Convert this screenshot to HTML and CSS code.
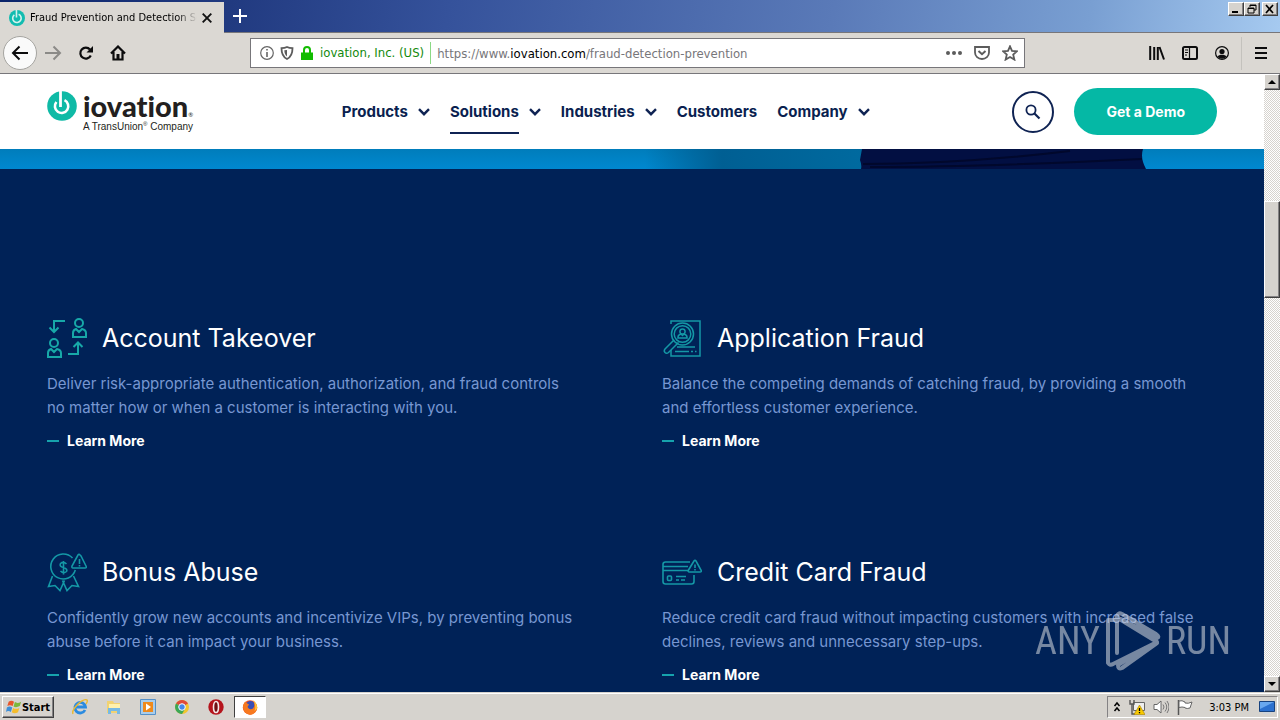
FILE: index.html
```html
<!DOCTYPE html>
<html lang="en">
<head>
<meta charset="utf-8">
<title>Fraud Prevention and Detection Solutions</title>
<link rel="stylesheet" href="styles.css">
</head>
<body>
<svg class="defs" aria-hidden="true">
  <symbol id="chevron" viewBox="0 0 12 8"><path d="M1 1.2l5 5 5-5" fill="none" stroke="#0f2353" stroke-width="2.4"/></symbol>
</svg>

<div class="titlebar">
  <div class="tab">
    <svg width="16" height="16" viewBox="0 0 30 30"><circle cx="15" cy="15" r="15" fill="#12bcb0"/><path d="M14 0v14M18 8a8 8 0 1 1-8 1" fill="none" stroke="#d5f2ee" stroke-width="3"/></svg>
    <span class="tab-title">Fraud Prevention and Detection Solutions</span>
    <button class="plain" aria-label="Close tab"><svg width="10" height="10" viewBox="0 0 10 10"><path d="M.7.7l8.6 8.6M9.3.7L.7 9.3" stroke="#111" stroke-width="1.9"/></svg></button>
  </div>
  <button class="plain new-tab" aria-label="New tab"><svg width="14" height="14" viewBox="0 0 14 14"><path d="M7 0v14M0 7h14" stroke="#fff" stroke-width="2"/></svg></button>
  <div class="window-buttons">
    <button class="bevel" aria-label="Minimize"><svg width="12" height="10" viewBox="0 0 12 10"><path d="M2 8h6" stroke="#000" stroke-width="2"/></svg></button>
    <button class="bevel" aria-label="Restore"><svg width="12" height="10" viewBox="0 0 12 10"><path d="M4 3V1h6v5H8M4 1.500h6M2 4h6v5H2zM2 4.500h6" fill="none" stroke="#000"/></svg></button>
    <button class="bevel close" aria-label="Close"><svg width="12" height="10" viewBox="0 0 12 10"><path d="M2 1l7 8M9 1L2 9" stroke="#000" stroke-width="1.700"/></svg></button>
  </div>
</div>

<div class="toolbar">
  <div class="tools-left">
    <button class="plain back" aria-label="Back"><svg width="18" height="16" viewBox="0 0 18 16"><path d="M17 8H2M8.500 1.500L2 8l6.500 6.500" fill="none" stroke="#0c0c0d" stroke-width="2"/></svg></button>
    <button class="plain" aria-label="Forward"><svg width="17" height="16" viewBox="0 0 17 16"><path d="M0 8h15M8.500 1.500L15 8l-6.500 6.500" fill="none" stroke="#8b8a87" stroke-width="2"/></svg></button>
    <button class="plain" aria-label="Reload"><svg width="16" height="16" viewBox="0 0 16 16"><path d="M12.800 10.500A5.500 5.500 0 1 1 12 4.500" fill="none" stroke="#0c0c0d" stroke-width="2.200"/><path d="M15 1v6.500H8.500z" fill="#0c0c0d"/></svg></button>
    <button class="plain" aria-label="Home"><svg width="16" height="16" viewBox="0 0 16 16"><path d="M1 8.500L8 1.500l7 7M3.500 7v7.500h9V7" fill="none" stroke="#0c0c0d" stroke-width="2.200"/><path d="M6.500 9h3v5.500h-3z" fill="#0c0c0d"/></svg></button>
  </div>
  <div class="address">
    <svg width="14" height="14" viewBox="0 0 14 14"><circle cx="7" cy="7" r="6.300" fill="none" stroke="#666" stroke-width="1.200"/><path d="M7 3v1.600M7 6v5" stroke="#666" stroke-width="1.600"/></svg>
    <svg width="14" height="14" viewBox="0 0 14 14"><path d="M7 1C5 2 3 2.200 1.500 2.200 1.500 8 3 11 7 13c4-2 5.500-5 5.500-10.800C11 2.200 9 2 7 1z" fill="none" stroke="#5c5c5c" stroke-width="1.800"/><path d="M7 4v6.500C5.500 9.500 4.500 8 4.300 4.300z" fill="#5c5c5c"/></svg>
    <svg width="14" height="14" viewBox="0 0 14 14"><path d="M1 6.500h12V14H1z" fill="#12bc00"/><path d="M4 7V4a3 3 0 0 1 6 0v3" fill="none" stroke="#12bc00" stroke-width="2"/></svg>
    <span class="identity">iovation, Inc. (US)</span>
    <span class="url">https://www.<b>iovation.com</b>/fraud-detection-prevention</span>
    <svg width="16" height="4" viewBox="0 0 16 4"><g fill="#5c5c5c"><circle cx="2" cy="2" r="2"/><circle cx="8" cy="2" r="2"/><circle cx="14" cy="2" r="2"/></g></svg>
    <svg width="16" height="14" viewBox="0 0 16 14"><path d="M1 1h14v5.500a7 6.500 0 0 1-14 0z" fill="none" stroke="#5c5c5c" stroke-width="1.800"/><path d="M4.500 5L8 8.200 11.500 5" fill="none" stroke="#5c5c5c" stroke-width="2"/></svg>
    <svg width="16" height="16" viewBox="0 0 16 16"><path d="M8 1.300l2 4.600 5 .4-3.800 3.300 1.200 5L8 12l-4.400 2.600 1.200-5L1 6.300l5-.4z" fill="none" stroke="#5c5c5c" stroke-width="1.800"/></svg>
  </div>
  <div class="tools-right">
    <button class="plain" aria-label="Library"><svg width="16" height="14" viewBox="0 0 16 14"><path d="M1.200 0v14M5.200 1v13M8.800 1v13M10.500 1L15 13.500" stroke="#0c0c0d" stroke-width="2"/></svg></button>
    <button class="plain" aria-label="Sidebars"><svg width="16" height="14" viewBox="0 0 16 14"><rect x="1" y="1" width="14" height="12" rx="1.500" fill="none" stroke="#0c0c0d" stroke-width="2"/><path d="M7.500 1v12M3 4h3M3 6.500h3M3 9h2" stroke="#0c0c0d" stroke-width="1.200"/></svg></button>
    <button class="plain" aria-label="Account"><svg width="14" height="14" viewBox="0 0 14 14"><circle cx="7" cy="7" r="6.400" fill="none" stroke="#0c0c0d" stroke-width="1.200"/><circle cx="7" cy="5.500" r="2.600" fill="#0c0c0d"/><path d="M2.500 10.500C4 8 10 8 11.500 10.500 9 13.500 5 13.500 2.500 10.500z" fill="#0c0c0d"/></svg></button>
    <button class="plain menu" aria-label="Menu"><svg width="12" height="12" viewBox="0 0 12 12"><path d="M0 1h12M0 6h12M0 11h12" stroke="#0c0c0d" stroke-width="2"/></svg></button>
  </div>
</div>

<div class="viewport">
  <div class="page">
    <header class="site-header">
      <a href="#" class="logo" aria-label="iovation home">
        <svg class="mark" width="30" height="30" viewBox="0 0 30 30"><circle cx="15" cy="15" r="14.800" fill="#0fbaa6"/><path d="M13.500 0v16" stroke="#fff" stroke-width="2.800"/><path d="M17.500 9.200A6.700 6.700 0 1 1 9.400 11" fill="none" stroke="#fff" stroke-width="2.600"/></svg>
        <span class="logo-words">
          <span class="brand">iovation<small>®</small></span>
          <span class="tagline">A TransUnion<sup>®</sup> Company</span>
        </span>
      </a>
      <nav class="nav">
        <a href="#">Products<svg width="12" height="8"><use href="#chevron"/></svg></a>
        <a href="#"><span class="current">Solutions</span><svg width="12" height="8"><use href="#chevron"/></svg></a>
        <a href="#">Industries<svg width="12" height="8"><use href="#chevron"/></svg></a>
        <a href="#">Customers</a>
        <a href="#">Company<svg width="12" height="8"><use href="#chevron"/></svg></a>
      </nav>
      <div class="actions">
        <button class="search" aria-label="Search"><svg width="16" height="16" viewBox="0 0 16 16"><circle cx="6" cy="6" r="4.600" fill="none" stroke="#0f2353" stroke-width="1.800"/><path d="M9.500 9.500l5 5" stroke="#0f2353" stroke-width="2.200"/></svg></button>
        <a href="#" class="demo">Get a Demo</a>
      </div>
    </header>

    <svg class="hero" viewBox="0 0 1264 20" preserveAspectRatio="none" aria-hidden="true">
      <defs>
        <linearGradient id="sky" x2="0" y2="1"><stop offset="0" stop-color="#007dbb"/><stop offset="1" stop-color="#0088d0"/></linearGradient>
        <linearGradient id="shade"><stop offset="0" stop-color="#005b8d" stop-opacity="0"/><stop offset=".35" stop-color="#005f93"/><stop offset="1" stop-color="#006a9f"/></linearGradient>
      </defs>
      <path d="M0 0h1264v20H0z" fill="url(#sky)"/>
      <path d="M645 0h220v20H645z" fill="url(#shade)"/>
      <path d="M862 0h281q-3 9 3 20H861q1-4-1-9z" fill="#020f42"/>
      <path d="M863 15Q960 15 1070 2M870 18Q980 18 1142 10" fill="none" stroke="#01082c" stroke-width="2"/>
    </svg>

    <main class="solutions">
      <section class="card">
        <h2><svg width="40" height="40" viewBox="0 0 40 40"><g fill="none" stroke="#17a8a8" stroke-width="2"><path d="M18 3H7v11M2.500 9.500L7 14l4.500-4.500M21 36h10V25M26.500 29l4.500-4.500 4.500 4.500"/><circle cx="32" cy="5" r="4"/><path d="M26 19v-4q0-3 3-4l3 3 3-3q4 1 4 4v4z"/><circle cx="7" cy="25" r="4"/><path d="M1 39v-4q0-3 3-4l3 3 3-3q4 1 4 4v4z"/></g></svg>Account Takeover</h2>
        <p>Deliver risk-appropriate authentication, authorization, and fraud controls<br>no matter how or when a customer is interacting with you.</p>
        <a href="#" class="more">Learn More</a>
      </section>
      <section class="card">
        <h2><svg width="40" height="40" viewBox="0 0 40 40"><g fill="none" stroke="#1498a6" stroke-width="1.500"><path d="M9 6V3h29v35H9v-6"/><circle cx="20.500" cy="16" r="11"/><circle cx="20.500" cy="16" r="8.300"/><circle cx="20.500" cy="13.500" r="2.600"/><path d="M16 20v-1q0-2 3-3l1.500 1.500L22 16q3 1 3 3v1zM12 22l-9 9q-1.500 2 0 3.500t3.500 0l10-10M15 29h18M13 33.500h14M29 33.500h2M33 33.500h1.500"/></g></svg>Application Fraud</h2>
        <p>Balance the competing demands of catching fraud, by providing a smooth<br>and effortless customer experience.</p>
        <a href="#" class="more">Learn More</a>
      </section>
      <section class="card">
        <h2><svg width="40" height="40" viewBox="0 0 40 40"><g fill="none" stroke="#1498a6" stroke-width="1.600"><path d="M25.500 6A12.500 12.500 0 1 0 28.300 18M5.500 24L1.500 34.500l6.500-1 5 5 4.500-10M26.500 24l5 10.500-6.500-1-5 5-4.500-10"/><path d="M33 3q-1-1.500-2 0l-6 11q-.5 2 1 2h12q2 0 1-2L34 4z"/><path d="M32.500 7v5M32.500 13v1.500M19.500 12q-3-3-6-.5-1.500 3 3 4 4.500 1.500 3 4-3 2.500-6-.5M16.500 9v13.500"/></g></svg>Bonus Abuse</h2>
        <p>Confidently grow new accounts and incentivize VIPs, by preventing bonus<br>abuse before it can impact your business.</p>
        <a href="#" class="more">Learn More</a>
      </section>
      <section class="card">
        <h2><svg width="40" height="40" viewBox="0 0 40 40"><g fill="none" stroke="#1498a6" stroke-width="1.600"><path d="M28 10H3.500Q1 10 1 12.500v17Q1 32 3.500 32h26q2.500 0 2.500-2.500V23M1 14.500h25M1 18.500h25M14 24.500h10M14 28h3M19 28h4"/><rect x="5.500" y="24" width="4" height="4.500" rx="1"/><path d="M32 9q1-1.500 2 0l5 9q1 2-1 2H27.500q-2 0-1-2zM33 12.500V16M33 17v1.500"/></g></svg>Credit Card Fraud</h2>
        <p>Reduce credit card fraud without impacting customers with increased false<br>declines, reviews and unnecessary step-ups.</p>
        <a href="#" class="more">Learn More</a>
      </section>
    </main>

    <div class="watermark">
      <span>ANY</span>
      <svg width="56" height="62" viewBox="0 0 56 62"><g fill="none" stroke="#c7ccd5" stroke-width="4" stroke-linejoin="round" stroke-linecap="round"><path d="M12 43V6q1-4 5-2l34 20q4 3 1 4L16 9"/><path d="M11 10H3v43q2 3 5 1l44-22L16 10"/><path d="M52 33L17 58q-4 2-4-3l28-17"/></g></svg>
      <span>RUN</span>
    </div>
  </div>
  <div class="scrollbar">
    <button class="bevel" aria-label="Scroll up"><svg width="8" height="4" viewBox="0 0 8 4"><path d="M4 0l4 4H0z"/></svg></button>
    <div class="track"><div class="thumb bevel"></div></div>
    <button class="bevel" aria-label="Scroll down"><svg width="8" height="4" viewBox="0 0 8 4"><path d="M0 0h8L4 4z"/></svg></button>
  </div>
</div>

<div class="taskbar">
  <button class="bevel start"><svg width="16" height="16" viewBox="0 0 18 16"><path d="M3 2q3-2 6 0L7.500 7q-3-2-6 0z" fill="#e8562a"/><path d="M10 2.500q3 2 7-.5l-1.500 5q-4 2-7 .5z" fill="#7cb83a"/><path d="M1 8.500q3-2 6 0l-1.500 5q-3-2-5.500 0z" fill="#3e8fd8"/><path d="M8 9q3 2 7 0l-1.500 5q-4 2-7 0z" fill="#f5bd2d"/></svg>Start</button>
  <div class="quick">
    <svg width="16" height="16" viewBox="0 0 16 16"><path d="M13 11a5.300 5.300 0 1 1 .5-3H4" fill="none" stroke="#2b8be0" stroke-width="2.800"/><path d="M1 15C-1 10 11-1 15 1q1 1-1 4" fill="none" stroke="#e9b933" stroke-width="1.400"/></svg>
    <svg width="16" height="16" viewBox="0 0 16 16"><path d="M1 2h6l1 2h6v10H1z" fill="#f1d272"/><path d="M3 5h11v5H3z" fill="#fff1ad"/><path d="M2 15V9h12v6h-3v-3H5v3z" fill="#77b9e4"/></svg>
    <svg width="16" height="16" viewBox="0 0 16 16"><path d="M.5.5h15v15H.5z" fill="#a9cdec" stroke="#5590c8"/><path d="M3 3h10v10H3z" fill="#ef8a1d"/><path d="M6 4.500l5 3.500-5 3.500z" fill="#fff"/></svg>
    <svg width="16" height="16" viewBox="0 0 16 16"><circle cx="8" cy="8" r="7" fill="#f2c52e"/><path d="M8 8L2 4.500a7 7 0 0 1 12 0z" fill="#e04a3a"/><path d="M8 8L2 4.500A7 7 0 0 0 8 15l3-5z" fill="#3ba757"/><circle cx="8" cy="8" r="3.300" fill="#4587ea" stroke="#fff"/></svg>
    <svg width="16" height="16" viewBox="0 0 16 16"><circle cx="8" cy="8" r="7.700" fill="#b5141c"/><ellipse cx="8" cy="8" rx="2.500" ry="5.500" fill="#701014" stroke="#f5e9e9" stroke-width="1.600"/></svg>
    <span class="active-app"><svg width="16" height="16" viewBox="0 0 16 16"><circle cx="8" cy="8.500" r="7.200" fill="#f0501f"/><circle cx="8.500" cy="6.500" r="4.500" fill="#3b4fb5"/><path d="M1 7Q2 3 3.500 2.500q1 2 3.500 3L5.500 8q2 3.500 5.500 1.500 2.500-3 .5-7 4.500 3 3.500 8-3 6-8 5-6-1-6-8.500z" fill="#f7791f"/><path d="M11 1q5 4 4 9l-2.500 2q2-6-1.500-11z" fill="#ffc53a"/></svg></span>
  </div>
  <div class="tray">
    <svg width="8" height="12" viewBox="0 0 8 12"><path d="M1.500 5L4 2l2.500 3M1.500 10L4 7l2.500 3" fill="none" stroke="#000" stroke-width="1.500"/></svg>
    <svg width="16" height="16" viewBox="0 0 16 16"><path d="M4.500 3.500h11v8h-11z" fill="#eee" stroke="#666"/><path d="M1 1v4h4V1M3 5v10h3" fill="none" stroke="#555" stroke-width="1.400"/><path d="M10.500 6l5.500 9.500H5z" fill="#f8c900" stroke="#a88200" stroke-width=".6"/><path d="M10.500 9v3M10.500 13v1.300" stroke="#000" stroke-width="1.300"/></svg>
    <svg width="16" height="16" viewBox="0 0 16 16"><path d="M1 5.500h3L8 2v12L4 10.500H1z" fill="#fff" stroke="#666"/><path d="M10 5.500q2 2.500 0 5M12 3.500q3.500 4.500 0 9M14 2q4 6 0 12" fill="none" stroke="#777"/></svg>
    <svg width="16" height="16" viewBox="0 0 16 16"><path d="M1.500 1v15" stroke="#555" stroke-width="1.500"/><path d="M2 2q3-1 6 1v1q3 1 7-1l-2 6q-3 1-5 0V8.500q-3-1-6 0z" fill="#fff" stroke="#666"/></svg>
    <time>3:03 PM</time>
    <svg width="16" height="14" viewBox="0 0 16 14"><path d="M.5 1.500h15v10H.5z" fill="#2c71cf" stroke="#17427f"/><path d="M1 2h14L1 9z" fill="#69a8ef"/><path d="M4 13h8" stroke="#c5d4e6"/></svg>
  </div>
</div>
</body>
</html>
```

FILE: styles.css
```css
* { box-sizing: border-box; }
body {
  margin: 0;
  height: 100vh;
  display: flex;
  flex-direction: column;
  overflow: hidden;
  background: #d6d3ce;
  font-family: "DejaVu Sans Condensed", "Noto Sans", sans-serif;
  font-size: 12px;
  color: #000;
}
svg { display: block; flex: none; }
button { font: inherit; color: inherit; padding: 0; }
a { color: inherit; text-decoration: none; }
.defs { position: absolute; width: 0; height: 0; }
.plain { border: 0; background: none; display: flex; align-items: center; justify-content: center; }
.bevel {
  border: 1px solid;
  border-color: #fff #404040 #404040 #fff;
  box-shadow: inset -1px -1px #848284;
  background: #d6d3ce;
  display: flex;
  align-items: center;
  justify-content: center;
}

/* Browser chrome */
.titlebar {
  flex: none;
  display: flex;
  align-items: flex-start;
  height: 33px;
  border-bottom: 1px solid #77767a;
  background: linear-gradient(100deg, #0a246a 0, #213a80 18%, #35529b 35%, #5a7ab8 65%, #799fd2 85%, #a6caf0 100%);
}
.tab {
  display: flex;
  align-items: center;
  gap: 5px;
  width: 224px;
  height: 31px;
  margin-top: 2px;
  padding: 0 12px 0 9px;
  background: #dbd8d3;
}
.tab-title {
  flex: 1;
  overflow: hidden;
  white-space: nowrap;
  font: 11px "DejaVu Sans Condensed", sans-serif;
  -webkit-mask-image: linear-gradient(90deg, #000 88%, transparent);
  mask-image: linear-gradient(90deg, #000 88%, transparent);
}
.new-tab { width: 32px; height: 32px; }
.window-buttons { display: flex; margin: 2px 2px 0 auto; }
.window-buttons .bevel { width: 16px; height: 14px; }
.window-buttons .close { margin-left: 2px; }
.toolbar {
  flex: none;
  display: flex;
  align-items: center;
  height: 41px;
  border-bottom: 1px solid #77767a;
  background: #dbd8d3;
}
.tools-left { display: flex; align-items: center; gap: 16px; width: 250px; padding-left: 3px; }
.back { width: 34px; height: 34px; margin-right: -8px; border: 1px solid #a5a4a0; border-radius: 50%; background: #fafafa; }
.address {
  flex: 1;
  display: flex;
  align-items: center;
  gap: 6px;
  height: 30px;
  padding: 0 6px 0 9px;
  border: 1px solid #77767a;
  background: #fff;
  white-space: nowrap;
  font-size: 13px;
}
.address svg:nth-last-child(-n+2) { margin-left: 6px; }
.identity { color: #128a0c; padding-right: 6px; border-right: 1px solid #8bd985; line-height: 22px; }
.url { flex: 1; color: #77767a; }
.url b { color: #000; font-weight: 400; }
.tools-right { display: flex; align-items: center; justify-content: flex-end; gap: 17px; width: 255px; padding-right: 13px; }
.menu { height: 33px; margin-left: -5px; padding-left: 13px; border-left: 1px solid #c4c2bd; }

/* Site */
.viewport { flex: 1; min-height: 0; display: flex; border-bottom: 1px solid #d6d3ce; }
.page {
  position: relative;
  flex: 1;
  min-width: 0;
  overflow: hidden;
  background: #002257;
  font-family: Inter, "Liberation Sans", sans-serif;
}
.site-header {
  display: flex;
  align-items: center;
  justify-content: space-between;
  height: 75px;
  padding: 0 47px;
  background: #fff;
  color: #0a1f50;
}
.logo { display: flex; align-items: flex-start; gap: 6px; width: 152px; height: 41px; color: #231f20; }
.logo-words { display: flex; flex-direction: column; }
.brand { font: 900 29px/30px Lato, sans-serif; font-variant-ligatures: none; white-space: nowrap; }
.brand small { font-size: 6px; font-weight: 400; line-height: 0; }
.tagline { font: 10px/11px "Liberation Sans", sans-serif; white-space: nowrap; }
.tagline sup { font-size: 6px; line-height: 0; }
.nav { display: flex; gap: 20px; font-size: 15px; font-weight: 700; line-height: 24px; }
.nav a { display: flex; align-items: center; gap: 10px; }
.current { margin-bottom: -10px; padding-bottom: 8px; border-bottom: 2px solid #0f2353; }
.actions { display: flex; align-items: center; gap: 20px; }
.search {
  display: flex;
  align-items: center;
  justify-content: center;
  width: 42px;
  height: 42px;
  border: 2px solid #0f2353;
  border-radius: 50%;
  background: #fff;
}
.demo { padding: 0 32px; border-radius: 24px; background: #05b8a5; color: #fff; font-size: 14px; font-weight: 700; line-height: 47px; }
.hero { width: 100%; height: 20px; }
.solutions {
  display: grid;
  grid-template-columns: 1fr 1fr;
  gap: 99px 60px;
  padding: 149px 47px 99px;
}
.card h2 { display: flex; align-items: center; gap: 15px; margin: 0 0 14px; color: #fff; font-size: 25px; font-weight: 400; line-height: 40px; }
.card p { margin: 0 0 9px; color: #7797d2; font-size: 15px; line-height: 24px; }
.more { display: flex; align-items: center; gap: 8px; color: #fff; font-size: 14px; font-weight: 700; line-height: 24px; }
.more::before { content: ""; width: 12px; height: 2px; background: #16a3ad; }
.watermark {
  position: absolute;
  right: 33px;
  bottom: 20px;
  display: flex;
  align-items: center;
  gap: 5px;
  color: #c7ccd5;
  opacity: .6;
  font: 38px/60px "Roboto Condensed", "Open Sans Condensed", "Liberation Sans Narrow", sans-serif;
}

.scrollbar { flex: none; display: flex; flex-direction: column; width: 16px; background: #d6d3ce; }
.scrollbar button { width: 16px; height: 16px; flex: none; }
.track { flex: 1; display: flex; flex-direction: column; background: repeating-conic-gradient(#fff 0 25%, #d6d3ce 0 50%) 0 0 / 2px 2px; }
.track::before { content: ""; flex: 111; }
.track::after { content: ""; flex: 379; }
.thumb { flex: 96; }

/* Taskbar */
.taskbar {
  flex: none;
  display: flex;
  align-items: center;
  height: 27px;
  padding: 0 2px;
  border-top: 1px solid #fff;
  background: #d6d3ce;
}
.start { gap: 0; width: 52px; height: 22px; font: 700 11px "DejaVu Sans Condensed", sans-serif; }
.quick { display: flex; align-items: center; gap: 18px; padding-left: 18px; }
.quick .active-app { display: flex; align-items: center; justify-content: center; width: 32px; height: 22px; margin-left: -8px; border: 1px solid; border-color: #404040 #fff #fff #404040; background: #fff; }
.tray { display: flex; align-items: center; gap: 8px; height: 22px; margin-left: auto; padding: 0 2px 0 5px; border: 1px solid; border-color: #848284 #fff #fff #848284; }
.tray time { padding: 0 2px 0 8px; font-size: 11px; white-space: nowrap; }
```
